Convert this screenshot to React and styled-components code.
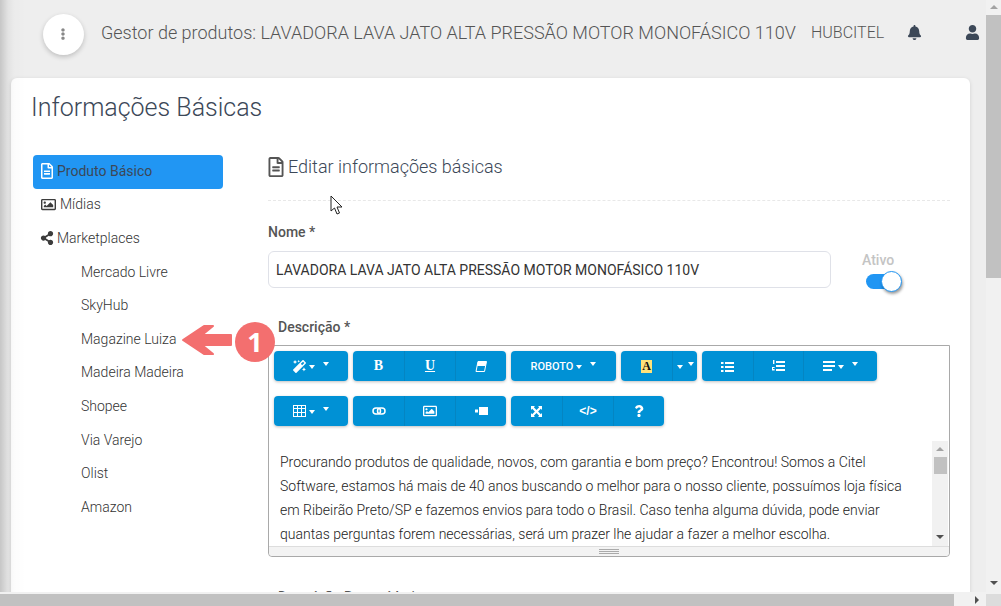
import React from "react";
import styled, { createGlobalStyle } from "styled-components";
import { FaEllipsisV, FaBell, FaUser, FaRegFileAlt, FaRegImage, FaShareAlt, FaMagic, FaQuestion } from "react-icons/fa";

const Global = createGlobalStyle`
  html, body { margin: 0; padding: 0; height: 100%; overflow: hidden; background: #eee; }
  body { font-family: Roboto, "Liberation Sans", sans-serif; color: #3c4858; }
  * { box-sizing: border-box; }
`;

const Window = styled.div`
  width: 1001px;
  height: 606px;
  display: grid;
  grid-template-columns: 986px 15px;
  grid-template-rows: 592px 14px;
  overflow: hidden;
  position: relative;
  &::before {
    content: "";
    position: absolute;
    left: 0;
    top: 0;
    width: 26px;
    height: 592px;
    background: linear-gradient(90deg, rgba(0, 0, 0, 0.17) 0, rgba(0, 0, 0, 0.05) 8px, rgba(0, 0, 0, 0.01) 14px, transparent 26px);
    pointer-events: none;
  }
`;

const Page = styled.div`
  overflow: hidden;
  padding: 0 16px 0 11px;
  background: #eee;
`;

const Topbar = styled.header`
  height: 78px;
  display: flex;
  align-items: center;
  padding: 0 0 14px 32px;
  color: #555;
  > * { flex: none; }
`;

const Round = styled.div`
  width: 41px;
  height: 41px;
  border-radius: 50%;
  background: #fff;
  box-shadow: 0 2px 5px rgba(0, 0, 0, 0.2);
  display: flex;
  align-items: center;
  justify-content: center;
  color: #888;
  font-size: 12px;
  padding-right: 1px;
  margin: 4px 17px 0 0;
`;

const Heading = styled.div`
  font-size: 18px;
  font-weight: 300;
  color: #555;
  white-space: nowrap;
  width: 710px;
`;

const Account = styled.div`
  font-size: 16px;
  font-weight: 300;
  color: #555;
  width: 96px;
`;

const TopIcon = styled.div`
  width: 58px;
  display: flex;
  color: #3c4858;
  font-size: 15px;
`;

const Card = styled.main`
  background: #fff;
  border-radius: 6px 6px 0 0;
  box-shadow: 0 1px 4px rgba(0, 0, 0, 0.12);
  padding: 12px 20px 0;
  height: 560px;
  overflow: hidden;
`;

const Title = styled.h1`
  margin: 0;
  font-size: 25px;
  line-height: 36px;
  font-weight: 300;
  color: #3c4858;
`;

const Columns = styled.div`
  display: flex;
  margin-top: 29px;
`;

const Side = styled.nav`
  width: 190px;
  margin-left: 2px;
  margin-right: 45px;
  display: flex;
  flex-direction: column;
`;

const SideItem = styled.div`
  height: 33.6px;
  padding-bottom: 2px;
  display: flex;
  align-items: center;
  gap: 4px;
  padding-left: ${(p) => (p.$sub ? "48px" : "8px")};
  font-size: 14px;
  font-weight: ${(p) => (p.$active ? 400 : 300)};
  color: ${(p) => (p.$active ? "#3c4858" : "#333")};
  background: ${(p) => (p.$active ? "#2196f3" : "transparent")};
  border-radius: 4px;
  svg { color: ${(p) => (p.$active ? "#fff" : "#3c3c3c")}; }
`;

const IconSlot = styled.span`
  width: ${(p) => p.$w}px;
  flex: none;
  display: flex;
  justify-content: center;
  svg { flex: none; }
`;

const Content = styled.section`
  flex: 1;
  min-width: 0;
`;

const SectionTitle = styled.div`
  height: 46px;
  padding-bottom: 22px;
  display: flex;
  align-items: center;
  gap: 5px;
  font-size: 18px;
  font-weight: 300;
  color: #3c4858;
  border-bottom: 1px dashed #e8e8e8;
  svg { color: #555; }
`;

const Label = styled.div`
  font-size: 14px;
  font-weight: 500;
  color: #555;
  line-height: 18px;
  padding-left: ${(p) => (p.$indent ? "10px" : "0")};
  margin-top: ${(p) => p.$top || 0}px;
`;

const NameRow = styled.div`
  display: flex;
  align-items: flex-start;
  height: 65px;
  margin-top: 22px;
`;

const NameField = styled.div`
  width: 563px;
`;

const NameInput = styled.div`
  margin-top: 10px;
  height: 37px;
  border: 1px solid #dfe1e8;
  border-radius: 6px;
  padding: 0 7px;
  display: flex;
  align-items: center;
  font-size: 14px;
  color: #333;
`;

const ActiveField = styled.div`
  margin: 29px 0 0 31px;
  font-size: 14px;
  font-weight: 500;
  color: #c4c4c4;
`;

const Toggle = styled.div`
  width: 30px;
  height: 15px;
  margin: 6px 0 0 4px;
  border-radius: 8px;
  background: #2196f3;
  position: relative;
`;

const Knob = styled.span`
  position: absolute;
  left: 15px;
  top: -3px;
  width: 21px;
  height: 21px;
  border-radius: 50%;
  background: #fff;
  border: 1px solid #2196f3;
  box-shadow: 1px 2px 3px rgba(0, 0, 0, 0.4);
`;

const Editor = styled.div`
  margin-top: 9px;
  height: 212px;
  border: 1px solid #a9a9a9;
  border-radius: 0 0 4px 4px;
  display: flex;
  flex-direction: column;
`;

const Toolbar = styled.div`
  height: 95px;
  padding: 5px 5px 0;
  display: flex;
  flex-direction: column;
  gap: 15px;
`;

const ToolRow = styled.div`
  display: flex;
  gap: 5px;
`;

const Group = styled.div`
  display: flex;
  height: 30px;
  border-radius: 4px;
  overflow: hidden;
  box-shadow: 0 1px 3px rgba(0, 0, 0, 0.25);
`;

const Tool = styled.div`
  width: ${(p) => p.$w || 51}px;
  display: flex;
  align-items: center;
  justify-content: center;
  gap: 3px;
  background: #0091d5;
  color: #fff;
  font-size: 11px;
  font-weight: 500;
  & + & { border-left: 1px solid #0485c2; }
`;

const Caret = styled.span`
  width: 0;
  height: 0;
  margin-left: ${(p) => p.$gap || 0}px;
  margin-top: ${(p) => (p.$up ? -4 : 1)}px;
  border-left: 3.5px solid transparent;
  border-right: 3.5px solid transparent;
  border-top: 4px solid #fff;
`;

const SerifMark = styled.span`
  font: 700 14px/14px "Liberation Serif", serif;
  text-decoration: ${(p) => (p.$under ? "underline" : "none")};
`;

const CodeMark = styled.span`
  font: 700 12px/14px "Liberation Sans", sans-serif;
`;

const ColorA = styled.span`
  width: 11px;
  height: 13px;
  background: #ffe27a;
  color: #111;
  font: 700 12px/13px "Liberation Serif", serif;
  text-align: center;
`;

const TextArea = styled.div`
  flex: 1;
  min-height: 0;
  display: flex;
`;

const Paragraph = styled.p`
  flex: 1;
  margin: 0;
  padding: 9px 0 0 11px;
  font-size: 14px;
  font-weight: 300;
  line-height: 24px;
  color: #222;
  overflow: hidden;
  white-space: nowrap;
`;

const MiniScroll = styled.div`
  width: 16px;
  margin-right: 1px;
  padding: 6px 0 7px;
  background: #f1f1f1;
  display: flex;
  flex-direction: column;
  align-items: center;
`;

const Arrow = styled.span`
  width: 0;
  height: 0;
  border-left: 4px solid transparent;
  border-right: 4px solid transparent;
  ${(p) => (p.$up ? "border-bottom: 4px solid #a3a3a3;" : "border-top: 4px solid #505050;")}
`;

const MiniThumb = styled.div`
  width: 13px;
  height: 17px;
  margin-top: 6px;
  background: #c1c1c1;
`;

const Spacer = styled.div`
  flex: 1;
`;

const Resize = styled.div`
  height: 10px;
  background: #f3f3f3;
  border-top: 1px solid #ddd;
  border-radius: 0 0 4px 4px;
  display: flex;
  justify-content: center;
  padding-top: 2px;
`;

const Grip = styled.div`
  width: 20px;
  height: 5px;
  border-top: 1px solid #aaa;
  border-bottom: 1px solid #aaa;
  position: relative;
  &::after {
    content: "";
    position: absolute;
    left: 0;
    right: 0;
    top: 1px;
    height: 1px;
    background: #aaa;
  }
`;

const VBar = styled.div`
  grid-column: 2;
  grid-row: 1 / span 2;
  background: #f1f1f1;
  display: flex;
  flex-direction: column;
  align-items: center;
  padding: 5px 0 0;
`;

const VThumb = styled.div`
  width: 15px;
  height: 263px;
  margin-top: 6px;
  background: #c1c1c1;
`;

const Corner = styled.div`
  width: 100%;
  height: 12px;
  margin-top: 9px;
  background: #dcdcdc;
`;

const HBar = styled.div`
  grid-column: 1;
  grid-row: 2;
  background: #f1f1f1;
  display: flex;
  align-items: center;
  padding: 2px 7px 0 0;
`;

const HThumb = styled.div`
  width: 954px;
  height: 100%;
  background: #c1c1c1;
`;

const RightArrow = styled.span`
  width: 0;
  height: 0;
  border-top: 4px solid transparent;
  border-bottom: 4px solid transparent;
  border-left: 4px solid #505050;
`;

const Callout = styled.svg`
  position: absolute;
  left: 180px;
  top: 315px;
`;

const CalloutNumber = styled.span`
  position: absolute;
  left: 235px;
  top: 323px;
  width: 40px;
  height: 38px;
  font: 700 27px/38px "Open Sans", sans-serif;
  color: #fff;
  text-align: center;
`;

const Pointer = styled.svg`
  position: absolute;
  left: 330px;
  top: 195px;
`;

const Glyph = ({ w = 16, h = 14, children }) => (
  <svg width={w} height={h} viewBox={`0 0 ${w} ${h}`} fill="#fff">{children}</svg>
);

const EraserIcon = () => (
  <Glyph w={12} h={11}>
    <path d="M3 0.5H11.5L9.5 10.5H1Z" fill="none" stroke="#fff" />
    <path d="M3 0.5H11.5L10.6 5H2.1Z" />
  </Glyph>
);
const BulletsIcon = () => (
  <Glyph w={13} h={11}>
    <path d="M0 1h2.5v2H0zM4 1h9v2H4zM0 5h2.5v2H0zM4 5h9v2H4zM0 9h2.5v2H0zM4 9h9v2H4z" />
  </Glyph>
);
const NumbersIcon = () => (
  <Glyph w={13} h={12}>
    <path d="M1 0h1.4v4H1zM0 7h2.6v1H1v1h1.6v1.6H0zM4 1h9v2H4zM4 5h9v2H4zM4 9h9v2H4z" />
  </Glyph>
);
const AlignIcon = () => (
  <Glyph w={12} h={10}>
    <path d="M0 0h12v2H0zM0 4h12v2H0zM0 8h9v2H0z" />
  </Glyph>
);
const TableIcon = () => (
  <Glyph w={13} h={12}>
    <path d="M0 0h13v12H0zM1 1v2h3V1zm4 0v2h3V1zm4 0v2h3V1zM1 4v3h3V4zm4 0v3h3V4zm4 0v3h3V4zM1 8v3h3V8zm4 0v3h3V8zm4 0v3h3V8z" fillRule="evenodd" />
  </Glyph>
);
const LinkIcon = () => (
  <Glyph w={14} h={8}>
    <rect x="1" y="1" width="7.5" height="6" rx="3" fill="none" stroke="#fff" strokeWidth="1.5" />
    <rect x="5.5" y="1" width="7.5" height="6" rx="3" fill="none" stroke="#fff" strokeWidth="1.5" />
  </Glyph>
);
const VideoIcon = () => (
  <Glyph w={13} h={8}>
    <path d="M0 2.5h3v3H0zM4 0h9v8H4z" />
  </Glyph>
);
const ExpandIcon = () => (
  <Glyph w={11} h={11}>
    <path d="M0 0h4L2.8 1.2 5.5 3.9 8.2 1.2 7 0h4v4L9.8 2.8 7.1 5.5 9.8 8.2 11 7v4H7l1.2-1.2-2.7-2.7-2.7 2.7L4 11H0V7l1.2 1.2 2.7-2.7-2.7-2.7L0 4z" />
  </Glyph>
);

const marketplaces = ["Mercado Livre", "SkyHub", "Magazine Luiza", "Madeira Madeira", "Shopee", "Via Varejo", "Olist", "Amazon"];

export default function App() {
  return (
    <>
      <Global />
      <Window>
        <Page>
          <Topbar>
            <Round><FaEllipsisV /></Round>
            <Heading>Gestor de produtos: LAVADORA LAVA JATO ALTA PRESSÃO MOTOR MONOFÁSICO 110V</Heading>
            <Account>HUBCITEL</Account>
            <TopIcon><FaBell /></TopIcon>
            <TopIcon><FaUser /></TopIcon>
          </Topbar>
          <Card>
            <Title>Informações Básicas</Title>
            <Columns>
              <Side>
                <SideItem $active><IconSlot $w={12}><FaRegFileAlt size={16} /></IconSlot>Produto Básico</SideItem>
                <SideItem><IconSlot $w={15}><FaRegImage size={15} /></IconSlot>Mídias</SideItem>
                <SideItem><IconSlot $w={12}><FaShareAlt size={14} /></IconSlot>Marketplaces</SideItem>
                {marketplaces.map((m) => <SideItem $sub key={m}>{m}</SideItem>)}
              </Side>
              <Content>
                <SectionTitle><IconSlot $w={15}><FaRegFileAlt size={20} /></IconSlot>Editar informações básicas</SectionTitle>
                <NameRow>
                  <NameField>
                    <Label>Nome *</Label>
                    <NameInput>LAVADORA LAVA JATO ALTA PRESSÃO MOTOR MONOFÁSICO 110V</NameInput>
                  </NameField>
                  <ActiveField>
                    Ativo
                    <Toggle><Knob /></Toggle>
                  </ActiveField>
                </NameRow>
                <Label $indent $top={30}>Descrição *</Label>
                <Editor>
                  <Toolbar>
                    <ToolRow>
                      <Group><Tool $w={74}><FaMagic size={13} /><Caret /><Caret $up $gap={5} /></Tool></Group>
                      <Group>
                        <Tool><SerifMark>B</SerifMark></Tool>
                        <Tool><SerifMark $under>U</SerifMark></Tool>
                        <Tool><EraserIcon /></Tool>
                      </Group>
                      <Group><Tool $w={105}>ROBOTO<Caret /><Caret $up $gap={5} /></Tool></Group>
                      <Group>
                        <Tool><ColorA>A</ColorA></Tool>
                        <Tool $w={25}><Caret /><Caret $up $gap={2} /></Tool>
                      </Group>
                      <Group>
                        <Tool><BulletsIcon /></Tool>
                        <Tool $w={50}><NumbersIcon /></Tool>
                        <Tool $w={74}><AlignIcon /><Caret /><Caret $up $gap={5} /></Tool>
                      </Group>
                    </ToolRow>
                    <ToolRow>
                      <Group><Tool $w={74}><TableIcon /><Caret /><Caret $up $gap={5} /></Tool></Group>
                      <Group>
                        <Tool><LinkIcon /></Tool>
                        <Tool><FaRegImage size={14} /></Tool>
                        <Tool><VideoIcon /></Tool>
                      </Group>
                      <Group>
                        <Tool><ExpandIcon /></Tool>
                        <Tool><CodeMark>&lt;/&gt;</CodeMark></Tool>
                        <Tool><FaQuestion size={12} /></Tool>
                      </Group>
                    </ToolRow>
                  </Toolbar>
                  <TextArea>
                    <Paragraph>
                      Procurando produtos de qualidade, novos, com garantia e bom preço? Encontrou! Somos a Citel<br />
                      Software, estamos há mais de 40 anos buscando o melhor para o nosso cliente, possuímos loja física<br />
                      em Ribeirão Preto/SP e fazemos envios para todo o Brasil. Caso tenha alguma dúvida, pode enviar<br />
                      quantas perguntas forem necessárias, será um prazer lhe ajudar a fazer a melhor escolha.
                    </Paragraph>
                    <MiniScroll>
                      <Arrow $up />
                      <MiniThumb />
                      <Spacer />
                      <Arrow />
                    </MiniScroll>
                  </TextArea>
                  <Resize><Grip /></Resize>
                </Editor>
                <Label $indent $top={31}>Descrição Resumida *</Label>
              </Content>
            </Columns>
          </Card>
        </Page>
        <VBar>
          <Arrow $up />
          <VThumb />
          <Spacer />
          <Arrow />
          <Corner />
        </VBar>
        <HBar>
          <HThumb />
          <Spacer />
          <RightArrow />
        </HBar>

        <Callout width="100" height="50" viewBox="0 0 100 50">
          <circle cx="75" cy="27" r="20" fill="#f36f6f" />
          <path d="M3 25 L24 11 L33 11 L22 20 L51 20 L51 30 L22 30 L33 39 L24 39 Z" fill="#f36f6f" stroke="#f36f6f" strokeWidth="2" strokeLinejoin="round" />
        </Callout>
        <CalloutNumber>1</CalloutNumber>
        <Pointer width="14" height="21" viewBox="0 0 14 21">
          <path d="M1 1 L1 16 L4.5 13 L7 19 L9.5 18 L7 12 L12 12 Z" fill="#fff" stroke="#222" strokeWidth="1" />
        </Pointer>
      </Window>
    </>
  );
}
